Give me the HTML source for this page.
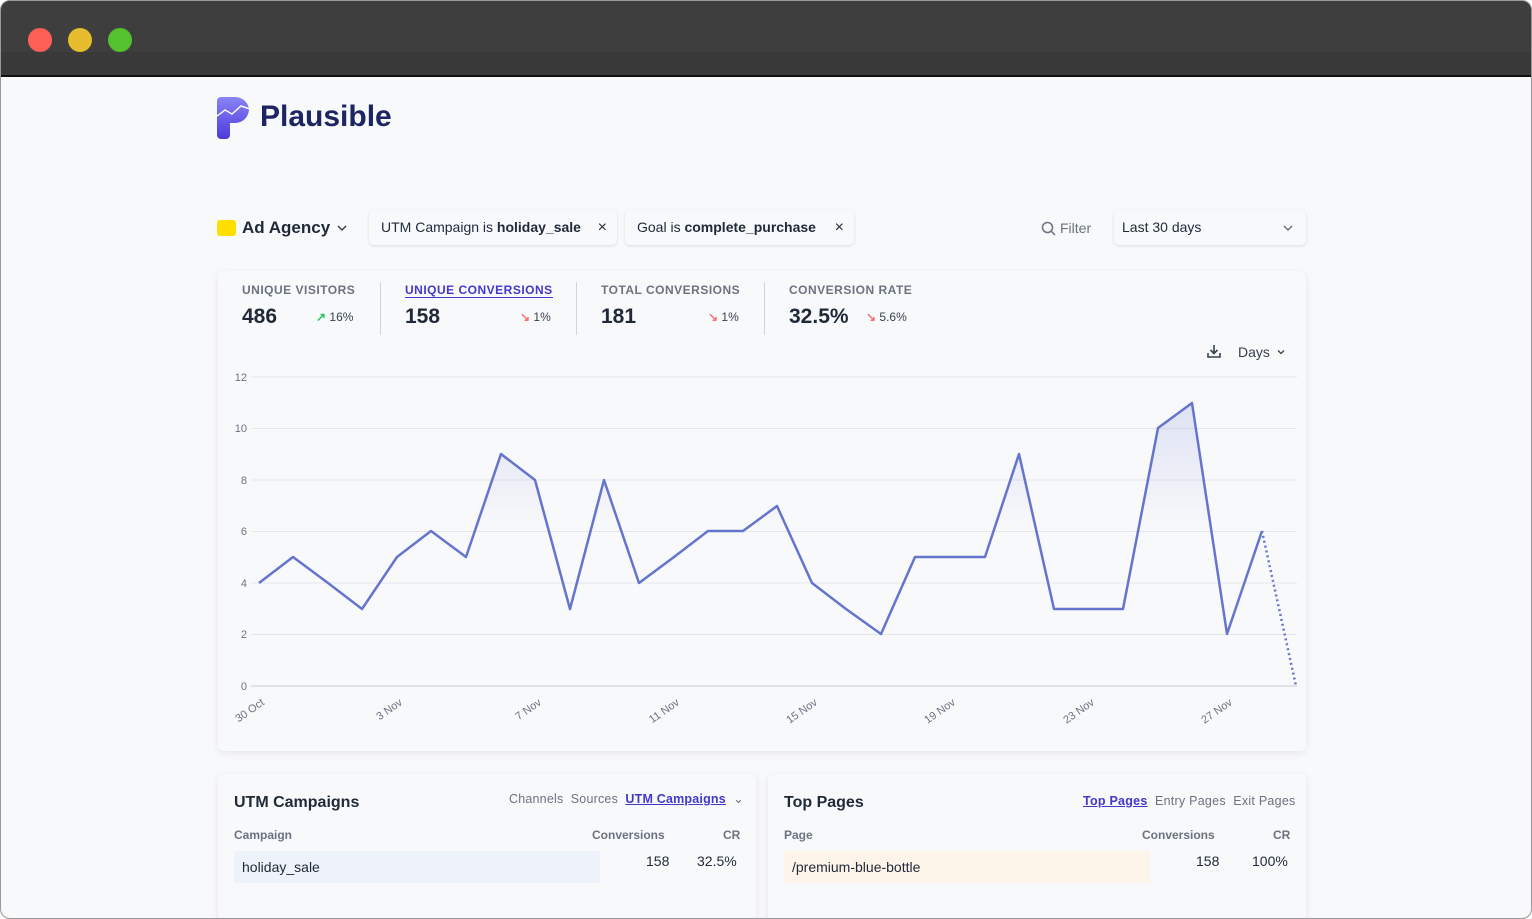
<!DOCTYPE html>
<html><head><meta charset="utf-8"><style>
*{margin:0;padding:0;box-sizing:border-box}
body{width:1532px;height:919px;overflow:hidden;background:#fff;font-family:"Liberation Sans",sans-serif;position:relative}
.win{position:absolute;left:0;top:0;width:1532px;height:919px;border-radius:10px;overflow:hidden;background:#f8f9fb;border:1px solid #999}
.bar{position:absolute;left:0;top:0;width:100%;height:76px;background:#393939;border-bottom:2px solid #111}
.bar .t{position:absolute;left:0;top:0;width:100%;height:51px;background:#3e3e3e}
.dot{position:absolute;top:27px;width:24px;height:24px;border-radius:50%}
.a{position:absolute;white-space:nowrap}
.card{position:absolute;background:#f8f9fb;border-radius:6px;box-shadow:0 2px 8px rgba(0,0,0,.08)}
.pill{position:absolute;top:209px;height:35px;background:#f8f9fb;border-radius:5px;box-shadow:0 1px 3px rgba(0,0,0,.12);font-size:14px;color:#1f2937;line-height:35px;padding-left:12px}
.lab{font-size:12px;font-weight:bold;letter-spacing:.5px;color:#6b7280}
.num{font-size:21px;font-weight:bold;color:#1f2937}
.pct{font-size:12px;color:#374151}
.pct span{font-weight:bold}
.th{font-size:12px;font-weight:bold;color:#6b7280}
.td{font-size:14px;color:#1f2937}
</style></head><body>
<div class="win">
<div class="bar"><div class="t"></div>
<div class="dot" style="left:27px;background:#fe5f57"></div>
<div class="dot" style="left:67px;background:#e6bd2e"></div>
<div class="dot" style="left:107px;background:#53c22c"></div></div>

<svg class="a" style="left:216px;top:95px" width="34" height="44" viewBox="0 0 34 44"><defs><linearGradient id="lg" x1="0" y1="0" x2="0" y2="1"><stop offset="0" stop-color="#8a84f7"/><stop offset="1" stop-color="#4d3ad9"/></linearGradient></defs><path d="M4 1h14a14 14 0 0 1 14 12v1a14 14 0 0 1-14 13h-5v12a4 4 0 0 1-4 4H4a4 4 0 0 1-4-4V5a4 4 0 0 1 4-4z" fill="url(#lg)"/><path d="M0 20l8-6 7 4 9-8 9 3" stroke="#f8f9fb" stroke-width="1.5" fill="none"/></svg>
<div class="a" style="left:259px;top:99px;font-size:30px;font-weight:bold;color:#1e2560">Plausible</div>

<div class="a" style="left:216px;top:219px;width:19px;height:16px;border-radius:3px;background:#ffdf00"></div>
<div class="a" style="left:241px;top:217px;font-size:17px;font-weight:bold;color:#1f2937">Ad Agency</div>
<svg class="a" style="left:335px;top:221px" width="12" height="12"><path d="M2 4l4 4 4-4" stroke="#374151" stroke-width="1.5" fill="none"/></svg>
<div class="pill" style="left:368px;width:248px">UTM Campaign is <b>holiday_sale</b><span style="position:absolute;right:10px;font-size:16px">×</span></div>
<div class="pill" style="left:624px;width:229px">Goal is <b>complete_purchase</b><span style="position:absolute;right:10px;font-size:16px">×</span></div>
<svg class="a" style="left:1040px;top:220px" width="15" height="15"><circle cx="6.5" cy="6.5" r="5" stroke="#6b7280" stroke-width="1.5" fill="none"/><path d="M10 10l4 4" stroke="#6b7280" stroke-width="1.5"/></svg>
<div class="a" style="left:1059px;top:219px;font-size:14px;color:#6b7280">Filter</div>
<div class="pill" style="left:1113px;width:192px;padding-left:8px">Last 30 days<svg style="position:absolute;right:12px;top:12px" width="12" height="12"><path d="M2 4l4 4 4-4" stroke="#6b7280" stroke-width="1.5" fill="none"/></svg></div>

<div class="card" style="left:217px;top:270px;width:1088px;height:480px"></div>
<div class="a lab" style="left:241px;top:282px">UNIQUE VISITORS</div>
<div class="a num" style="left:241px;top:304px">486</div>
<div class="a pct" style="left:315px;top:309px"><span style="color:#22c55e">↗</span> 16%</div>
<div class="a" style="left:379px;top:281px;width:1px;height:53px;background:#d1d5db"></div>
<div class="a lab" style="left:404px;top:282px;color:#4338ca;border-bottom:1.5px solid #4338ca">UNIQUE CONVERSIONS</div>
<div class="a num" style="left:404px;top:304px">158</div>
<div class="a pct" style="left:519px;top:309px"><span style="color:#f87171">↘</span> 1%</div>
<div class="a" style="left:575px;top:281px;width:1px;height:53px;background:#d1d5db"></div>
<div class="a lab" style="left:600px;top:282px">TOTAL CONVERSIONS</div>
<div class="a num" style="left:600px;top:304px">181</div>
<div class="a pct" style="left:707px;top:309px"><span style="color:#f87171">↘</span> 1%</div>
<div class="a" style="left:763px;top:281px;width:1px;height:53px;background:#d1d5db"></div>
<div class="a lab" style="left:788px;top:282px">CONVERSION RATE</div>
<div class="a num" style="left:788px;top:304px">32.5%</div>
<div class="a pct" style="left:865px;top:309px"><span style="color:#f87171">↘</span> 5.6%</div>
<svg class="a" style="left:1205px;top:342px" width="16" height="16"><path d="M8 2v8M4.5 7l3.5 3.5L11.5 7M2 10v4h12v-4" stroke="#374151" stroke-width="1.6" fill="none"/></svg>
<div class="a" style="left:1237px;top:343px;font-size:14px;color:#374151">Days</div>
<svg class="a" style="left:1275px;top:346px" width="10" height="10"><path d="M2 3.5l3 3 3-3" stroke="#374151" stroke-width="1.3" fill="none"/></svg>

<svg class="a" style="left:217px;top:360px" width="1088" height="380">
<defs><linearGradient id="fg" x1="0" y1="0" x2="0" y2="1"><stop offset="0" stop-color="#6574cd" stop-opacity=".18"/><stop offset=".45" stop-color="#6574cd" stop-opacity="0"/></linearGradient></defs>
<g stroke="#e5e7eb" stroke-width="1">
<line x1="33" y1="16" x2="1079" y2="16"/><line x1="33" y1="67.5" x2="1079" y2="67.5"/><line x1="33" y1="119" x2="1079" y2="119"/><line x1="33" y1="170.5" x2="1079" y2="170.5"/><line x1="33" y1="222" x2="1079" y2="222"/><line x1="33" y1="273.5" x2="1079" y2="273.5"/><line x1="33" y1="325" x2="1079" y2="325" stroke="#c8ccd2"/></g>
<g font-size="11" fill="#6b7280" font-family="Liberation Sans" text-anchor="end">
<text x="29" y="20">12</text><text x="29" y="71">10</text><text x="29" y="123">8</text><text x="29" y="174">6</text><text x="29" y="226">4</text><text x="29" y="277">2</text><text x="29" y="329">0</text></g>
<g font-size="11" fill="#6b7280" font-family="Liberation Sans" text-anchor="end">
<text transform="translate(47,343) rotate(-35)">30 Oct</text><text transform="translate(185,343) rotate(-35)">3 Nov</text><text transform="translate(324,343) rotate(-35)">7 Nov</text><text transform="translate(462,343) rotate(-35)">11 Nov</text><text transform="translate(600,343) rotate(-35)">15 Nov</text><text transform="translate(738,343) rotate(-35)">19 Nov</text><text transform="translate(877,343) rotate(-35)">23 Nov</text><text transform="translate(1015,343) rotate(-35)">27 Nov</text></g>
<polygon fill="url(#fg)" points="41,325 41,222 75,196 110,222 144,248 179,196 213,170 248,196 283,93 317,119 352,248 386,119 421,222 456,196 490,170 525,170 559,145 594,222 628,248 663,273 697,196 732,196 767,196 801,93 836,248 871,248 905,248 940,67 974,42 1009,273 1044,170 1044,325"/>
<polyline fill="none" stroke="#6574cd" stroke-width="2.5" stroke-linejoin="round" points="41,222 75,196 110,222 144,248 179,196 213,170 248,196 283,93 317,119 352,248 386,119 421,222 456,196 490,170 525,170 559,145 594,222 628,248 663,273 697,196 732,196 767,196 801,93 836,248 871,248 905,248 940,67 974,42 1009,273 1044,170"/>
<line x1="1044" y1="170" x2="1078" y2="325" stroke="#6574cd" stroke-width="2.5" stroke-dasharray="2 3"/>
</svg>

<div class="card" style="left:217px;top:773px;width:538px;height:160px"></div>
<div class="a" style="left:233px;top:793px;font-size:16px;font-weight:bold;color:#1f2937">UTM Campaigns</div>
<div class="a" style="left:508px;top:790px;font-size:12.5px;letter-spacing:.2px;color:#6b7280">Channels&nbsp; Sources&nbsp; <span style="color:#4338ca;font-weight:bold;text-decoration:underline">UTM Campaigns</span>&nbsp; ⌄</div>
<div class="a th" style="left:233px;top:827px">Campaign</div>
<div class="a th" style="left:591px;top:827px">Conversions</div>
<div class="a th" style="left:722px;top:827px">CR</div>
<div class="a" style="left:233px;top:850px;width:366px;height:32px;background:#eef2fb"></div>
<div class="a td" style="left:241px;top:858px">holiday_sale</div>
<div class="a td" style="left:645px;top:852px">158</div>
<div class="a td" style="left:696px;top:852px">32.5%</div>

<div class="card" style="left:767px;top:773px;width:538px;height:160px"></div>
<div class="a" style="left:783px;top:793px;font-size:16px;font-weight:bold;color:#1f2937">Top Pages</div>
<div class="a" style="left:1082px;top:793px;font-size:12.5px;letter-spacing:.25px;color:#6b7280"><span style="color:#4338ca;font-weight:bold;text-decoration:underline">Top Pages</span>&nbsp; Entry Pages&nbsp; Exit Pages</div>
<div class="a th" style="left:783px;top:827px">Page</div>
<div class="a th" style="left:1141px;top:827px">Conversions</div>
<div class="a th" style="left:1272px;top:827px">CR</div>
<div class="a" style="left:783px;top:850px;width:366px;height:32px;background:#fdf4ea"></div>
<div class="a td" style="left:791px;top:858px">/premium-blue-bottle</div>
<div class="a td" style="left:1195px;top:852px">158</div>
<div class="a td" style="left:1251px;top:852px">100%</div>
</div>
</body></html>
